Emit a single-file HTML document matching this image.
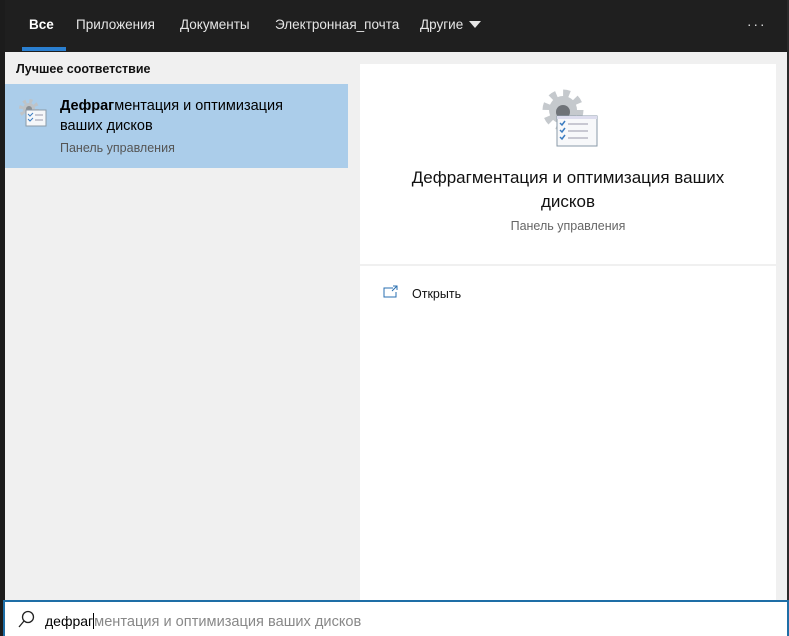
<!DOCTYPE html>
<html><head><meta charset="utf-8"><style>
*{margin:0;padding:0;box-sizing:border-box}
body{width:789px;height:636px;overflow:hidden;background:#f0f0f0;font-family:"Liberation Sans",sans-serif;position:relative}
.left{position:absolute;left:0;top:0;width:5px;height:636px;background:#1c1c1c}
.rightedge{position:absolute;right:0;top:0;width:2px;height:636px;background:#2a2a2a}
.nav{position:absolute;left:5px;top:0;width:784px;height:52px;background:#1f1f1f;color:#e6e6e6;font-size:13.5px}
.nav span{position:absolute;top:17px}
.ul{position:absolute;left:17px;top:47px;width:44px;height:4px;background:#2a7fd0}
.sel{position:absolute;left:5px;top:84px;width:343px;height:84px;background:#abcdea}
.card{position:absolute;left:360px;top:64px;width:416px;height:536px;background:#fff}
.sep{position:absolute;left:360px;top:264px;width:416px;height:2px;background:#f0f0f0}
.search{position:absolute;left:3px;top:600px;width:786px;height:36px;background:#fff;border:2px solid #1e6ea6;border-bottom:none}
</style></head><body>
<div class="left"></div>
<div class="nav">
<span style="left:24px;font-weight:bold;color:#fff">Все</span>
<span style="left:71px">Приложения</span>
<span style="left:175px">Документы</span>
<span style="left:270px">Электронная_почта</span>
<span style="left:415px">Другие</span>
<svg style="position:absolute;left:464px;top:21px" width="12" height="8"><path d="M0 0h12L6 7z" fill="#e6e6e6"/></svg>
<span style="left:742px;letter-spacing:2px">···</span>
<div class="ul"></div>
</div>
<div style="position:absolute;left:16px;top:62px;font-size:12.5px;color:#111;font-weight:bold">Лучшее соответствие</div>
<div class="sel"></div>
<svg style="position:absolute;left:17px;top:97px" width="32" height="32" viewBox="0 0 32 32">
<circle cx="12" cy="12" r="6" fill="#bfc3c7"/>
<circle cx="12" cy="12" r="8" fill="none" stroke="#bfc3c7" stroke-width="4" stroke-dasharray="3 3.3"/>
<circle cx="12" cy="12" r="3" fill="#8a8f94"/>
<rect x="9" y="13" width="20" height="16" fill="#f5f7f9" stroke="#8a9aa8"/>
<path d="M11 17l2 2 3-3M11 22l2 2 3-3" stroke="#3a7bc0" fill="none"/><path d="M18 18h8M18 23h8" stroke="#99a"/>
</svg>
<div style="position:absolute;left:60px;top:96px;font-size:14.5px;color:#000;line-height:20px"><b>Дефраг</b>ментация и оптимизация<br>ваших дисков</div>
<div style="position:absolute;left:60px;top:141px;font-size:12.5px;color:#555">Панель управления</div>
<div class="card"></div>
<svg style="position:absolute;left:537px;top:86px" width="62" height="62" viewBox="0 0 62 62">
<circle cx="26" cy="24" r="14" fill="#c5c9cd"/>
<circle cx="26" cy="24" r="17" fill="none" stroke="#c5c9cd" stroke-width="7" stroke-dasharray="6.5 6.85"/>
<circle cx="26" cy="26" r="7" fill="#6f7378"/>
<rect x="20" y="30" width="40" height="30" fill="#f7f8fa" stroke="#8a9aa8"/>
<rect x="20" y="30" width="40" height="3" fill="#dde"/>
<path d="M23 37l2 2 3-4M23 44l2 2 3-4M23 51l2 2 3-4" stroke="#3a7bc0" stroke-width="1.5" fill="none"/>
<path d="M31 38h20M31 45h20M31 52h20" stroke="#99a"/>
</svg>
<div style="position:absolute;left:360px;top:166px;width:416px;text-align:center;font-size:17px;color:#111;line-height:24px">Дефрагментация и оптимизация ваших<br>дисков</div>
<div style="position:absolute;left:360px;top:219px;width:416px;text-align:center;font-size:12.5px;color:#666">Панель управления</div>
<div class="sep"></div>
<svg style="position:absolute;left:383px;top:285px" width="16" height="14"><path d="M10 3H1v9h12V7" stroke="#2a6fb0" fill="none"/><path d="M10 1h4v4M14 1l-5 5" stroke="#2a6fb0" fill="none"/></svg>
<div style="position:absolute;left:412px;top:287px;font-size:12.5px;color:#111">Открыть</div>
<div class="rightedge"></div>
<div class="search">
<svg style="position:absolute;left:12px;top:8px" width="18" height="20"><circle cx="11" cy="7" r="5.5" stroke="#222" stroke-width="1.3" fill="none"/><path d="M7 11L2 17" stroke="#222" stroke-width="1.3"/></svg>
<div style="position:absolute;left:40px;top:11px;font-size:14px;color:#000">дефраг<span style="border-left:1px solid #000"></span><span style="color:#888;font-size:14.6px">ментация и оптимизация ваших дисков</span></div>
</div>
</body></html>
